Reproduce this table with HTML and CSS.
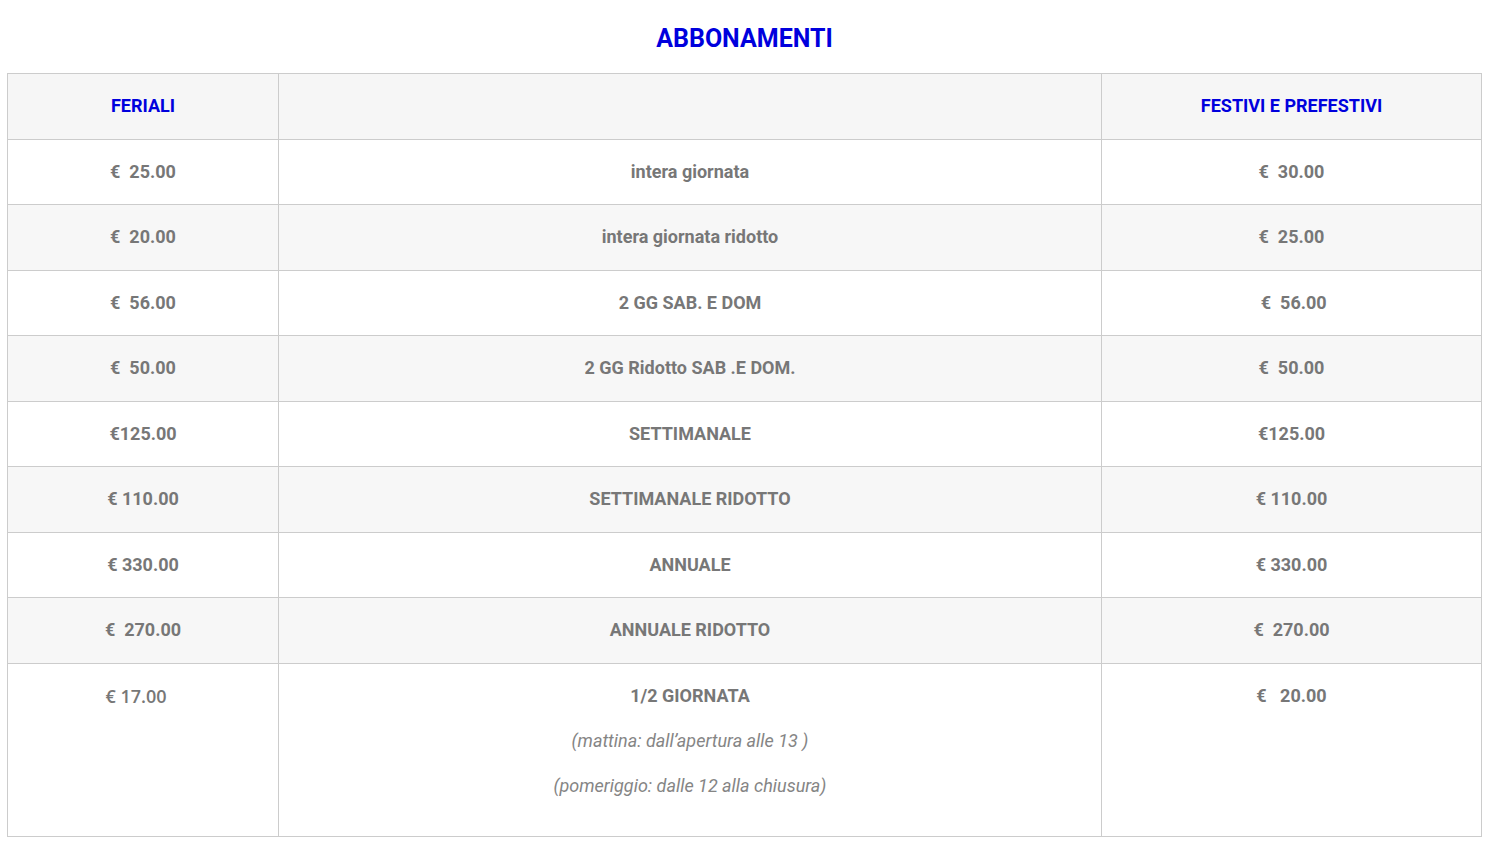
FILE: index.html
```html
<!DOCTYPE html>
<html lang="it">
<head>
<meta charset="utf-8">
<title>Abbonamenti</title>
<link rel="stylesheet" href="styles.css">
</head>
<body>
<main class="page">
  <h2 class="title">ABBONAMENTI</h2>
  <table class="prices">
    <colgroup>
      <col class="c1"><col class="c2"><col class="c3">
    </colgroup>
    <thead>
      <tr><th>FERIALI</th><th></th><th>FESTIVI E PREFESTIVI</th></tr>
    </thead>
    <tbody>
      <tr><td>€&nbsp; 25.00</td><td>intera giornata</td><td>€&nbsp; 30.00</td></tr>
      <tr class="alt"><td>€&nbsp; 20.00</td><td>intera giornata ridotto</td><td>€&nbsp; 25.00</td></tr>
      <tr><td>€&nbsp; 56.00</td><td>2 GG SAB. E DOM</td><td>&nbsp;€&nbsp; 56.00</td></tr>
      <tr class="alt"><td>€&nbsp; 50.00</td><td>2 GG Ridotto SAB .E DOM.</td><td>€&nbsp; 50.00</td></tr>
      <tr><td>€125.00</td><td>SETTIMANALE</td><td>€125.00</td></tr>
      <tr class="alt"><td>€ 110.00</td><td>SETTIMANALE RIDOTTO</td><td>€ 110.00</td></tr>
      <tr><td>€ 330.00</td><td>ANNUALE</td><td>€ 330.00</td></tr>
      <tr class="alt"><td>€&nbsp; 270.00</td><td>ANNUALE RIDOTTO</td><td>€&nbsp; 270.00</td></tr>
      <tr class="top">
        <td><span class="alt-font">€ 17.00&nbsp;&nbsp;&nbsp;</span></td>
        <td>
          <p>1/2 GIORNATA</p>
          <p class="note">(mattina: dall’apertura alle 13 )</p>
          <p class="note last">(pomeriggio: dalle 12 alla chiusura)</p>
        </td>
        <td>€&nbsp;&nbsp; 20.00</td>
      </tr>
    </tbody>
  </table>
</main>
</body>
</html>
```

FILE: styles.css
```css
html, body {
  margin: 0;
  padding: 0;
  background: #ffffff;
}

.page {
  padding: 24px 6px 0 7px;
  font-family: Roboto, "Liberation Sans", sans-serif;
}

.title {
  margin: 0 0 19px 0;
  text-align: center;
  font-size: 25px;
  line-height: 30px;
  font-weight: 700;
  color: #0000dd;
}

.prices {
  width: 100%;
  border-collapse: collapse;
  table-layout: fixed;
  border: 1px solid #cccccc;
}

.prices col.c1 { width: 271px; }
.prices col.c3 { width: 380px; }

.prices th,
.prices td {
  border: 1px solid #cccccc;
  padding: 20px 10px;
  text-align: center;
  font-size: 18px;
  line-height: 24.5px;
  font-weight: 700;
  color: #777777;
  vertical-align: top;
}

.prices th {
  background: #f6f6f6;
  color: #0000dd;
}

.prices tr.alt td {
  background: #f7f7f7;
}

.prices p {
  margin: 0 0 20.5px 0;
}

.prices p.last {
  margin-bottom: 17.5px;
}

.prices p.note {
  font-style: italic;
  font-weight: 400;
  color: #858585;
}

.alt-font {
  font-family: "Open Sans", "Liberation Sans", sans-serif;
  font-weight: 600;
  font-size: 18px;
  line-height: 24px;
}
```
